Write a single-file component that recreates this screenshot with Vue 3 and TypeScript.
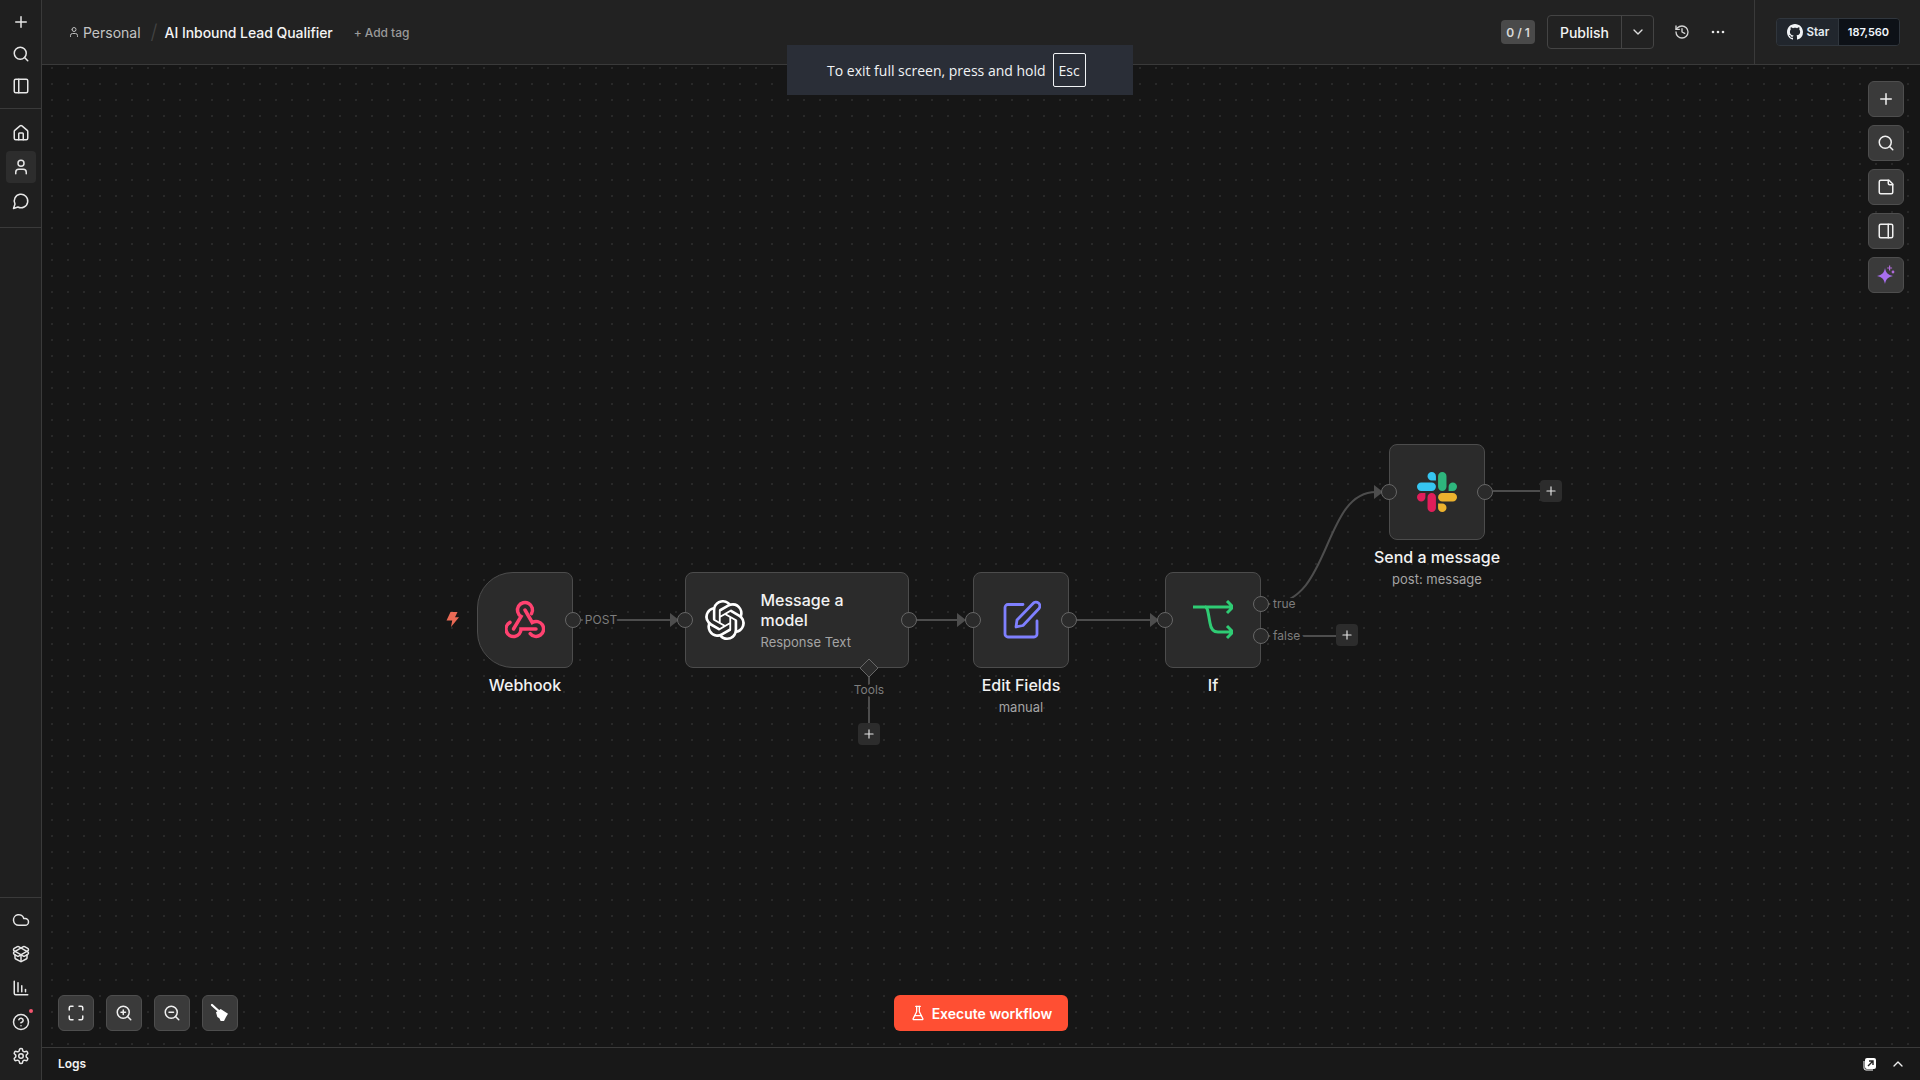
<template>
  <div class="app">
    <aside class="sidebar">
      <div class="side-group">
        <button v-for="name in ['plus', 'search', 'panelLeft']" :key="name" class="side-btn"><Icon :name="name" :size="18" /></button>
      </div>
      <div class="side-group">
        <button class="side-btn"><Icon name="house" :size="18" /></button>
        <button class="side-btn active"><Icon name="user" :size="18" /></button>
        <button class="side-btn"><Icon name="chat" :size="18" /></button>
      </div>
      <div class="side-spacer"></div>
      <div class="side-group bottom">
        <button class="side-btn"><Icon name="cloud" :size="18" /></button>
        <button class="side-btn"><Icon name="box" :size="18" /></button>
        <button class="side-btn"><Icon name="chart" :size="18" /></button>
        <button class="side-btn help"><Icon name="help" :size="18" /><span class="red-dot"></span></button>
        <button class="side-btn"><Icon name="settings" :size="18" /></button>
      </div>
    </aside>

    <div class="main">
      <header class="topbar">
        <div class="crumbs">
          <Icon name="user" :size="12" class="crumb-icon" />
          <span class="crumb">Personal</span>
          <span class="slash">/</span>
          <span class="title">AI Inbound Lead Qualifier</span>
          <span class="add-tag">+ Add tag</span>
        </div>
        <div class="top-actions">
          <span class="badge">0 / 1</span>
          <div class="publish">
            <span class="publish-main">Publish</span>
            <span class="publish-caret"><Icon name="chevronDown" :size="16" /></span>
          </div>
          <button class="ghost"><Icon name="history" :size="16" /></button>
          <button class="ghost dots-btn">
            <svg width="16" height="16" viewBox="0 0 16 16" fill="#e8e8e8">
              <circle cx="3" cy="8" r="1.300" />
              <circle cx="8" cy="8" r="1.300" />
              <circle cx="13" cy="8" r="1.300" />
            </svg>
          </button>
        </div>
        <div class="star-wrap">
          <div class="gh">
            <span class="gh-star"><svg class="gh-mark" viewBox="0 0 16 16"><path :d="githubMark" fill="#f0f3f6" /></svg>Star</span>
            <span class="gh-count">187,560</span>
          </div>
        </div>
      </header>

      <section class="canvas">
        <div
          v-for="node in nodes"
          :key="node.id"
          class="node"
          :class="{ trigger: node.id === 'webhook' }"
          :style="{ left: node.x - ox + 'px', top: node.y - oy + 'px', width: node.w + 'px' }"
        >
          <template v-if="node.id === 'message'">
            <svg class="openai" viewBox="0 0 24 24"><path :d="openaiLogo" fill="#fff" /></svg>
            <div class="node-text">
              <div class="node-title">Message a<br />model</div>
              <div class="node-sub">Response Text</div>
            </div>
          </template>
          <template v-else>
            <svg v-if="node.id === 'webhook'" class="node-icon" viewBox="0 0 40 38" fill="none" stroke="#ff4270" stroke-width="3.5" stroke-linecap="round">
              <path d="M31 28H16A7.5 7.5 0 1 1 5 21.4" />
              <path d="M8.5 28L16.1 15.4A7.5 7.5 0 1 1 26.5 12.7" />
              <path d="M20 9L27.25 21.5A7.5 7.5 0 1 1 25.2 32.6" />
            </svg>
            <svg v-else-if="node.id === 'edit'" class="node-icon" viewBox="0 0 40 40" fill="none" stroke="#7f80ff" stroke-width="2.800" stroke-linejoin="round" stroke-linecap="round">
              <path d="M22 4.500H7A3 3 0 0 0 4 7.500V34A3 3 0 0 0 7 37H33A3 3 0 0 0 36 34V21" />
              <path d="M15 27L16 20L32 3.500A3.500 3.500 0 0 1 38 8.500L22 25.500Z" />
            </svg>
            <svg v-else-if="node.id === 'if'" class="node-icon" viewBox="0 0 40 40" fill="none" stroke="#2fcc74" stroke-width="3" stroke-linejoin="round">
              <path d="M0 7H40M34 1L40 7L34 13" />
              <path d="M12 7C15 7 15 13 17 23C18 30 21 32 25 32H40M34 26L40 32L34 38" />
            </svg>
            <svg v-else class="node-icon" viewBox="0 0 24 24">
              <path v-for="part in slackLogo" :key="part.fill" :d="part.d" :fill="part.fill" />
            </svg>
            <div class="node-label">
              <div class="label-main">{{ node.label }}</div>
              <div v-if="node.sub" class="label-sub">{{ node.sub }}</div>
            </div>
          </template>
        </div>

        <svg class="wires" :viewBox="`${ox} ${oy} 1878 982`">
          <path v-for="d in wires" :key="d" :d="d" class="wire" />
          <path v-for="d in arrows" :key="d" :d="d" class="arrow" />
          <circle v-for="h in handles" :key="`${h.x}-${h.y}`" :cx="h.x" :cy="h.y" r="7.5" class="handle" />
          <path d="M869 659l9 9-9 9-9-9z" class="handle" />
          <text v-for="t in wireLabels" :key="t.text" :x="t.x" :y="t.y" :text-anchor="t.anchor" class="wire-label">{{ t.text }}</text>
        </svg>

        <div v-for="p in plusButtons" :key="p.x" class="plus" :style="{ left: p.x - ox + 'px', top: p.y - oy + 'px' }">
          <Icon name="plus" :size="14" />
        </div>

        <svg class="bolt" width="13" height="15" viewBox="0 0 13 15">
          <path d="M4.500 0H11.500L9 5.200H13L5 15L6.200 8.500H.5z" fill="#ea6a55" />
        </svg>

        <div class="panel-right">
          <button class="tool"><Icon name="plus" :size="18" /></button>
          <button class="tool"><Icon name="search" :size="18" /></button>
          <button class="tool"><Icon name="note" :size="18" /></button>
          <button class="tool"><Icon name="panelRight" :size="18" /></button>
          <button class="tool">
            <svg width="22" height="22" viewBox="0 0 22 22">
              <path d="M10 4c1 5 3 7 8 8-5 1-7 3-8 8-1-5-3-7-8-8 5-1 7-3 8-8z" fill="#a86ff0" />
              <path d="M14.600 1.500v5M12.100 4h5" stroke="#b06ad8" stroke-width="1.200" fill="none" />
              <circle cx="18" cy="8" r="1.400" fill="#b06ad8" />
            </svg>
          </button>
        </div>

        <div class="panel-left">
          <button class="tool"><Icon name="fit" :size="18" /></button>
          <button class="tool"><Icon name="zoomIn" :size="18" /></button>
          <button class="tool"><Icon name="zoomOut" :size="18" /></button>
          <button class="tool">
            <svg width="32" height="32" viewBox="0 0 96 96">
              <path d="M24 24L44 42" stroke="#fff" stroke-width="7" stroke-linecap="round" />
              <path d="M36 46L50 36L72 50L66 60L60 72L50 72L46 64L40 60Z" fill="#fff" />
            </svg>
          </button>
        </div>

        <button class="execute"><Icon name="flask" :size="16" />Execute workflow</button>
      </section>

      <footer class="logs">
        <span class="logs-title">Logs</span>
        <div class="logs-actions">
          <svg width="14" height="14" viewBox="0 0 14 14">
            <rect x="2" y="1" width="11" height="11" rx="2" fill="#fff" />
            <path d="M1 4v7a2 2 0 0 0 2 2h7" fill="none" stroke="#fff" stroke-width="1" />
            <path d="M5 9l5-5M6 4h4v4" fill="none" stroke="#222" stroke-width="1.400" />
          </svg>
          <Icon name="chevronUp" :size="16" />
        </div>
      </footer>
    </div>

    <div class="fs-toast">
      <span>To exit full screen, press and hold</span>
      <kbd class="esc">Esc</kbd>
    </div>
  </div>
</template>

<script setup lang="ts">
import { h, type FunctionalComponent } from 'vue'

// canvas origin in page coordinates
const ox = 42
const oy = 65

const circle = (x: number, y: number, r: number) => `M${x - r} ${y}a${r} ${r} 0 1 0 ${2 * r} 0a${r} ${r} 0 1 0 ${-2 * r} 0`

const icons: Record<string, string[]> = {
  plus: ['M5 12h14', 'M12 5v14'],
  search: [circle(11, 11, 8), 'm21 21-4.3-4.3'],
  panelLeft: ['M5 3h14a2 2 0 0 1 2 2v14a2 2 0 0 1-2 2H5a2 2 0 0 1-2-2V5a2 2 0 0 1 2-2z', 'M9 3v18'],
  panelRight: ['M5 3h14a2 2 0 0 1 2 2v14a2 2 0 0 1-2 2H5a2 2 0 0 1-2-2V5a2 2 0 0 1 2-2z', 'M15 3v18'],
  house: ['M15 21v-8a1 1 0 0 0-1-1h-4a1 1 0 0 0-1 1v8', 'M3 10a2 2 0 0 1 .709-1.528l7-5.999a2 2 0 0 1 2.582 0l7 5.999A2 2 0 0 1 21 10v9a2 2 0 0 1-2 2H5a2 2 0 0 1-2-2z'],
  user: ['M19 21v-2a4 4 0 0 0-4-4H9a4 4 0 0 0-4 4v2', circle(12, 7, 4)],
  chat: ['M7.9 20A9 9 0 1 0 4 16.1L2 22Z'],
  cloud: ['M17.5 19H9a7 7 0 1 1 6.71-9h1.79a4.5 4.5 0 1 1 0 9Z'],
  box: [
    'M12 22v-9',
    'M15.17 2.21a1.67 1.67 0 0 1 1.63 0L21 4.57a1.93 1.93 0 0 1 0 3.36L8.82 14.79a1.655 1.655 0 0 1-1.64 0L3 12.43a1.93 1.93 0 0 1 0-3.36z',
    'M20 13v3.87a2.06 2.06 0 0 1-1.11 1.83l-6 3.08a1.93 1.93 0 0 1-1.78 0l-6-3.08A2.06 2.06 0 0 1 4 16.87V13',
    'M21 12.43a1.93 1.93 0 0 0 0-3.36L8.83 2.2a1.64 1.64 0 0 0-1.63 0L3 4.57a1.93 1.93 0 0 0 0 3.36l12.18 6.86a1.636 1.636 0 0 0 1.63 0z',
  ],
  chart: ['M13 17V9', 'M18 17v-3', 'M3 3v16a2 2 0 0 0 2 2h16', 'M8 17V5'],
  help: [circle(12, 12, 10), 'M9.09 9a3 3 0 0 1 5.83 1c0 2-3 3-3 3', 'M12 17h.01'],
  settings: [
    'M12.22 2h-.44a2 2 0 0 0-2 2v.18a2 2 0 0 1-1 1.73l-.43.25a2 2 0 0 1-2 0l-.15-.08a2 2 0 0 0-2.73.73l-.22.38a2 2 0 0 0 .73 2.73l.15.1a2 2 0 0 1 1 1.72v.51a2 2 0 0 1-1 1.74l-.15.09a2 2 0 0 0-.73 2.73l.22.38a2 2 0 0 0 2.73.73l.15-.08a2 2 0 0 1 2 0l.43.25a2 2 0 0 1 1 1.73V20a2 2 0 0 0 2 2h.44a2 2 0 0 0 2-2v-.18a2 2 0 0 1 1-1.73l.43-.25a2 2 0 0 1 2 0l.15.08a2 2 0 0 0 2.73-.73l.22-.39a2 2 0 0 0-.73-2.73l-.15-.08a2 2 0 0 1-1-1.74v-.5a2 2 0 0 1 1-1.74l.15-.09a2 2 0 0 0 .73-2.73l-.22-.38a2 2 0 0 0-2.73-.73l-.15.08a2 2 0 0 1-2 0l-.43-.25a2 2 0 0 1-1-1.73V4a2 2 0 0 0-2-2z',
    circle(12, 12, 3),
  ],
  history: ['M3 12a9 9 0 1 0 9-9 9.75 9.75 0 0 0-6.74 2.74L3 8', 'M3 3v5h5', 'M12 7v5l4 2'],
  chevronDown: ['m6 9 6 6 6-6'],
  chevronUp: ['m18 15-6-6-6 6'],
  note: ['M16 3H5a2 2 0 0 0-2 2v14a2 2 0 0 0 2 2h14a2 2 0 0 0 2-2V8Z', 'M15 3v4a2 2 0 0 0 2 2h4'],
  fit: ['M8 3H5a2 2 0 0 0-2 2v3', 'M21 8V5a2 2 0 0 0-2-2h-3', 'M3 16v3a2 2 0 0 0 2 2h3', 'M16 21h3a2 2 0 0 0 2-2v-3'],
  zoomIn: [circle(11, 11, 8), 'm21 21-4.3-4.3', 'M11 8v6', 'M8 11h6'],
  zoomOut: [circle(11, 11, 8), 'm21 21-4.3-4.3', 'M8 11h6'],
  flask: ['M10 2v7.527a2 2 0 0 1-.211.896L4.72 20.55a1 1 0 0 0 .9 1.45h12.76a1 1 0 0 0 .9-1.45l-5.069-10.127A2 2 0 0 1 14 9.527V2', 'M8.5 2h7', 'M7 16h10'],
}

const Icon: FunctionalComponent<{ name: string; size?: number }> = (props) =>
  h(
    'svg',
    {
      width: props.size ?? 16,
      height: props.size ?? 16,
      viewBox: '0 0 24 24',
      fill: 'none',
      stroke: 'currentColor',
      'stroke-width': 2,
      'stroke-linecap': 'round',
      'stroke-linejoin': 'round',
    },
    icons[props.name].map((d) => h('path', { d })),
  )

interface FlowNode {
  id: string
  x: number
  y: number
  w: number
  label: string
  sub?: string
}

const nodes: FlowNode[] = [
  { id: 'webhook', x: 477, y: 572, w: 96, label: 'Webhook' },
  { id: 'message', x: 685, y: 572, w: 224, label: 'Message a model' },
  { id: 'edit', x: 973, y: 572, w: 96, label: 'Edit Fields', sub: 'manual' },
  { id: 'if', x: 1165, y: 572, w: 96, label: 'If' },
  { id: 'slack', x: 1389, y: 444, w: 96, label: 'Send a message', sub: 'post: message' },
]

const handles = [
  { x: 573, y: 620 },
  { x: 685, y: 620 },
  { x: 909, y: 620 },
  { x: 973, y: 620 },
  { x: 1069, y: 620 },
  { x: 1165, y: 620 },
  { x: 1261, y: 604 },
  { x: 1261, y: 636 },
  { x: 1389, y: 492 },
  { x: 1485, y: 492 },
]

const wires = [
  'M581 620H672',
  'M917 620H960',
  'M1077 620H1152',
  'M1269 604C1332 604 1322 492 1376 492',
  'M1269 636H1336',
  'M1493 491H1540',
  'M869 677V723',
]

const arrows = ['M670 613l9 7-9 7z', 'M957 613l9 7-9 7z', 'M1150 613l9 7-9 7z', 'M1374 485l9 7-9 7z']

const wireLabels = [
  { text: 'POST', x: 601, y: 624, anchor: 'middle' },
  { text: 'Tools', x: 869, y: 694, anchor: 'middle' },
  { text: 'true', x: 1273, y: 608, anchor: 'start' },
  { text: 'false', x: 1273, y: 640, anchor: 'start' },
]

const plusButtons = [
  { x: 858, y: 723 },
  { x: 1336, y: 624 },
  { x: 1540, y: 480 },
]

const githubMark =
  'M8 0C3.58 0 0 3.58 0 8c0 3.54 2.29 6.53 5.47 7.59.4.07.55-.17.55-.38 0-.19-.01-.82-.01-1.49-2.01.37-2.53-.49-2.69-.94-.09-.23-.48-.94-.82-1.13-.28-.15-.68-.52-.01-.53.63-.01 1.08.58 1.23.82.72 1.21 1.87.87 2.33.66.07-.52.28-.87.51-1.07-1.78-.2-3.64-.89-3.64-3.95 0-.87.31-1.59.82-2.15-.08-.2-.36-1.02.08-2.12 0 0 .67-.21 2.2.82.64-.18 1.32-.27 2-.27.68 0 1.36.09 2 .27 1.53-1.04 2.2-.82 2.2-.82.44 1.1.16 1.92.08 2.12.51.56.82 1.27.82 2.15 0 3.07-1.87 3.75-3.65 3.95.29.25.54.73.54 1.48 0 1.07-.01 1.93-.01 2.2 0 .21.15.46.55.38A8.013 8.013 0 0016 8c0-4.42-3.58-8-8-8z'

const openaiLogo =
  'M22.2819 9.8211a5.9847 5.9847 0 0 0-.5157-4.9108 6.0462 6.0462 0 0 0-6.5098-2.9A6.0651 6.0651 0 0 0 4.9807 4.1818a5.9847 5.9847 0 0 0-3.9977 2.9 6.0462 6.0462 0 0 0 .7427 7.0966 5.98 5.98 0 0 0 .511 4.9107 6.051 6.051 0 0 0 6.5146 2.9001A5.9847 5.9847 0 0 0 13.2599 24a6.0557 6.0557 0 0 0 5.7718-4.2058 5.9894 5.9894 0 0 0 3.9977-2.9001 6.0557 6.0557 0 0 0-.7475-7.0729zm-9.022 12.6081a4.4755 4.4755 0 0 1-2.8764-1.0408l.1419-.0804 4.7783-2.7582a.7948.7948 0 0 0 .3927-.6813v-6.7369l2.02 1.1686a.071.071 0 0 1 .038.052v5.5826a4.504 4.504 0 0 1-4.4945 4.4944zm-9.6607-4.1254a4.4708 4.4708 0 0 1-.5346-3.0137l.142.0852 4.783 2.7582a.7712.7712 0 0 0 .7806 0l5.8428-3.3685v2.3324a.0804.0804 0 0 1-.0332.0615L9.74 19.9502a4.4992 4.4992 0 0 1-6.1408-1.6464zM2.3408 7.8956a4.485 4.485 0 0 1 2.3655-1.9728V11.6a.7664.7664 0 0 0 .3879.6765l5.8144 3.3543-2.0201 1.1685a.0757.0757 0 0 1-.071 0l-4.8303-2.7865A4.504 4.504 0 0 1 2.3408 7.872zm16.5963 3.8558L13.1038 8.364 15.1192 7.2a.0757.0757 0 0 1 .071 0l4.8303 2.7913a4.4944 4.4944 0 0 1-.6765 8.1042v-5.6772a.79.79 0 0 0-.407-.667zm2.0107-3.0231l-.142-.0852-4.7735-2.7818a.7759.7759 0 0 0-.7854 0L9.409 9.2297V6.8974a.0662.0662 0 0 1 .0284-.0615l4.8303-2.7866a4.4992 4.4992 0 0 1 6.6802 4.66zM8.3065 12.863l-2.02-1.1638a.0804.0804 0 0 1-.038-.0567V6.0742a4.4992 4.4992 0 0 1 7.3757-3.4537l-.142.0805L8.704 5.459a.7948.7948 0 0 0-.3927.6813zm1.0976-2.3654l2.602-1.4998 2.6069 1.4998v2.9994l-2.5974 1.4997-2.6067-1.4997Z'

const slackLogo = [
  {
    fill: '#E01E5A',
    d: 'M5.042 15.165a2.528 2.528 0 0 1-2.52 2.523A2.528 2.528 0 0 1 0 15.165a2.527 2.527 0 0 1 2.522-2.52h2.52v2.52zM6.313 15.165a2.527 2.527 0 0 1 2.521-2.52 2.527 2.527 0 0 1 2.521 2.52v6.313A2.528 2.528 0 0 1 8.834 24a2.528 2.528 0 0 1-2.521-2.522v-6.313z',
  },
  {
    fill: '#36C5F0',
    d: 'M8.834 5.042a2.528 2.528 0 0 1-2.521-2.52A2.528 2.528 0 0 1 8.834 0a2.528 2.528 0 0 1 2.521 2.522v2.52H8.834zM8.834 6.313a2.528 2.528 0 0 1 2.521 2.521 2.528 2.528 0 0 1-2.521 2.521H2.522A2.528 2.528 0 0 1 0 8.834a2.528 2.528 0 0 1 2.522-2.521h6.312z',
  },
  {
    fill: '#2EB67D',
    d: 'M18.956 8.834a2.528 2.528 0 0 1 2.522-2.521A2.528 2.528 0 0 1 24 8.834a2.528 2.528 0 0 1-2.522 2.521h-2.522V8.834zM17.688 8.834a2.528 2.528 0 0 1-2.523 2.521 2.527 2.527 0 0 1-2.52-2.521V2.522A2.527 2.527 0 0 1 15.165 0a2.528 2.528 0 0 1 2.523 2.522v6.312z',
  },
  {
    fill: '#ECB22E',
    d: 'M15.165 18.956a2.528 2.528 0 0 1 2.523 2.522A2.528 2.528 0 0 1 15.165 24a2.527 2.527 0 0 1-2.52-2.522v-2.522h2.52zM15.165 17.688a2.527 2.527 0 0 1-2.52-2.523 2.526 2.526 0 0 1 2.52-2.52h6.313A2.527 2.527 0 0 1 24 15.165a2.528 2.528 0 0 1-2.522 2.523h-6.313z',
  },
]
</script>

<style>
html,
body {
  margin: 0;
  background: #161616;
}
</style>

<style scoped>
.app {
  position: relative;
  display: flex;
  width: 1920px;
  height: 1080px;
  overflow: hidden;
  font-family: Inter, "Liberation Sans", sans-serif;
  color: #f2f2f2;
  background: #161616;
}
button {
  border: 0;
  padding: 0;
  background: none;
  color: inherit;
  font: inherit;
}

/* left nav */
.sidebar {
  display: flex;
  flex-direction: column;
  width: 41px;
  flex: none;
  background: #1f1f1f;
  border-right: 1px solid #3a3a3a;
}
.side-group {
  display: flex;
  flex-direction: column;
  align-items: center;
  gap: 2px;
  padding: 6px 0;
  border-bottom: 1px solid #3a3a3a;
}
.side-group:first-child {
  gap: 0;
  height: 109px;
  box-sizing: border-box;
}
.side-group:nth-child(2) {
  height: 119px;
  box-sizing: border-box;
  padding: 8px 0;
}
.side-group.bottom {
  border-bottom: 0;
  border-top: 1px solid #3a3a3a;
  padding: 6px 0 8px;
  height: 183px;
  box-sizing: border-box;
}
.side-spacer {
  flex: 1;
}
.side-btn {
  position: relative;
  display: flex;
  align-items: center;
  justify-content: center;
  width: 30px;
  height: 32px;
  border-radius: 4px;
  color: #e6e6e6;
}
.side-btn.active {
  background: #2d2d2d;
}
.red-dot {
  position: absolute;
  top: 3px;
  right: 3px;
  width: 4px;
  height: 4px;
  border-radius: 50%;
  background: #f4566f;
}

.main {
  display: flex;
  flex-direction: column;
  flex: 1;
  min-width: 0;
}

/* header */
.topbar {
  display: flex;
  align-items: center;
  height: 64px;
  flex: none;
  background: #222222;
  border-bottom: 1px solid #3a3a3a;
}
.crumbs {
  display: flex;
  align-items: center;
  flex: 1;
  padding-left: 26px;
  font-size: 14px;
}
.crumb-icon {
  color: #bdbdbd;
  margin-right: 3px;
}
.crumb {
  color: #c4c4c4;
}
.slash {
  margin: 0 7px 0 10px;
  font-size: 20px;
  font-weight: 300;
  line-height: 20px;
  color: #444;
}
.title {
  font-weight: 500;
  letter-spacing: -0.05px;
  color: #f4f4f4;
}
.add-tag {
  margin-left: 21px;
  font-size: 12px;
  font-weight: 500;
  letter-spacing: -0.05px;
  color: #9a9a9a;
}
.top-actions {
  display: flex;
  align-items: center;
  height: 64px;
  padding-right: 20px;
  border-right: 1px solid #3a3a3a;
}
.badge {
  display: flex;
  align-items: center;
  justify-content: center;
  width: 34px;
  height: 24px;
  margin-right: 12px;
  border-radius: 4px;
  background: #4a4a4a;
  color: #d9d9d9;
  font-size: 12px;
  font-weight: 600;
}
.publish {
  display: flex;
  height: 34px;
  margin-right: 12px;
  border: 1px solid #444;
  border-radius: 4px;
  box-sizing: border-box;
}
.publish-main {
  display: flex;
  align-items: center;
  justify-content: center;
  width: 73px;
  font-size: 14px;
  font-weight: 500;
  border-right: 1px solid #444;
}
.publish-caret {
  display: flex;
  align-items: center;
  justify-content: center;
  width: 31px;
  color: #ddd;
}
.ghost {
  display: flex;
  align-items: center;
  justify-content: center;
  width: 32px;
  height: 32px;
  color: #d4d4d4;
}
.dots-btn {
  margin-left: 4px;
}
.star-wrap {
  display: flex;
  align-items: center;
  justify-content: center;
  width: 165px;
}
.gh {
  display: flex;
  height: 28px;
  width: 124px;
  box-sizing: border-box;
  border: 1px solid #30363d;
  border-radius: 4px;
  font-size: 11.5px;
  font-weight: 600;
  overflow: hidden;
}
.gh-star {
  display: flex;
  align-items: center;
  gap: 4px;
  width: 62px;
  box-sizing: border-box;
  padding-left: 10px;
  background: #21262d;
  border-right: 1px solid #30363d;
  color: #e6edf3;
}
.gh-mark {
  width: 16px;
  height: 16px;
}
.gh-count {
  display: flex;
  align-items: center;
  justify-content: center;
  flex: 1;
  background: #0d1117;
  color: #f0f6fc;
  font-size: 11px;
}

/* canvas */
.canvas {
  position: relative;
  flex: 1;
  background-color: #161616;
  background-image: radial-gradient(circle at 8px 8px, #3d3d3d 0.5px, transparent 0.9px);
  background-size: 16px 16px;
  background-position: 2px 11px;
}
.node {
  position: absolute;
  display: flex;
  align-items: center;
  justify-content: center;
  height: 96px;
  box-sizing: border-box;
  background: #2b2b2b;
  border: 1px solid #4c4c4c;
  border-radius: 8px;
}
.node.trigger {
  border-radius: 36px 8px 8px 36px;
}
.node:nth-child(2) {
  justify-content: flex-start;
  padding-left: 19px;
}
.node-icon {
  width: 40px;
  height: 40px;
}
.openai {
  width: 40px;
  height: 40px;
  flex: none;
}
.node-text {
  margin-left: 15.5px;
}
.node-title {
  font-size: 16px;
  line-height: 20px;
  font-weight: 500;
}
.node-sub {
  margin-top: 3px;
  font-size: 13px;
  line-height: 18px;
  color: #a4a4a4;
}
.node-label {
  position: absolute;
  top: 100%;
  left: 50%;
  transform: translateX(-50%);
  margin-top: 8px;
  text-align: center;
  white-space: nowrap;
}
.label-main {
  font-size: 16px;
  line-height: 20px;
  font-weight: 500;
}
.label-sub {
  margin-top: 3px;
  font-size: 13px;
  line-height: 18px;
  color: #a4a4a4;
}
.wires {
  position: absolute;
  inset: 0;
  width: 100%;
  height: 100%;
  pointer-events: none;
}
.wire {
  fill: none;
  stroke: #4d4d4d;
  stroke-width: 2;
}
.arrow {
  fill: #4d4d4d;
}
.handle {
  fill: #2b2b2b;
  stroke: #666;
  stroke-width: 1;
}
.wire-label {
  font-size: 12px;
  fill: #7d7d7d;
  paint-order: stroke;
  stroke: #161616;
  stroke-width: 6px;
}
.plus {
  position: absolute;
  display: flex;
  align-items: center;
  justify-content: center;
  width: 22px;
  height: 22px;
  border-radius: 4px;
  background: #2c2c2c;
  color: #e4e4e4;
}
.bolt {
  position: absolute;
  left: 404px;
  top: 547px;
}
.panel-right {
  position: absolute;
  top: 16px;
  right: 16px;
  display: flex;
  flex-direction: column;
  gap: 8px;
}
.panel-left {
  position: absolute;
  left: 16px;
  bottom: 16px;
  display: flex;
  gap: 12px;
}
.tool {
  display: flex;
  align-items: center;
  justify-content: center;
  width: 36px;
  height: 36px;
  box-sizing: border-box;
  border: 1px solid #4e4e4e;
  border-radius: 6px;
  background: #3a3a3a;
  color: #f0f0f0;
}
.execute {
  position: absolute;
  bottom: 16px;
  left: 50%;
  transform: translateX(-50%);
  display: flex;
  align-items: center;
  justify-content: center;
  gap: 6px;
  width: 174px;
  height: 36px;
  border-radius: 6px;
  background: #ff4f33;
  color: #fff;
  font-size: 14px;
  font-weight: 600;
}

/* logs bar */
.logs {
  display: flex;
  align-items: center;
  justify-content: space-between;
  flex: none;
  padding: 0 14px 1px 16px;
  box-sizing: border-box;
  height: 33px;
  background: #181818;
  border-top: 1px solid #3a3a3a;
}
.logs-title {
  font-size: 12px;
  font-weight: 600;
}
.logs-actions {
  display: flex;
  align-items: center;
  gap: 13px;
  color: #eee;
}

/* browser fullscreen hint */
.fs-toast {
  position: absolute;
  top: 45px;
  left: 787px;
  display: flex;
  align-items: center;
  gap: 7px;
  width: 346px;
  height: 50px;
  box-sizing: border-box;
  padding-left: 40px;
  background: #2a2e37;
  color: #f1f3f5;
  font-family: "Open Sans", "Noto Sans", sans-serif;
  font-size: 14px;
}
.esc {
  display: flex;
  align-items: center;
  justify-content: center;
  width: 33px;
  height: 34px;
  box-sizing: border-box;
  border: 1px solid #f1f3f5;
  border-radius: 2px;
  font: inherit;
}
</style>
